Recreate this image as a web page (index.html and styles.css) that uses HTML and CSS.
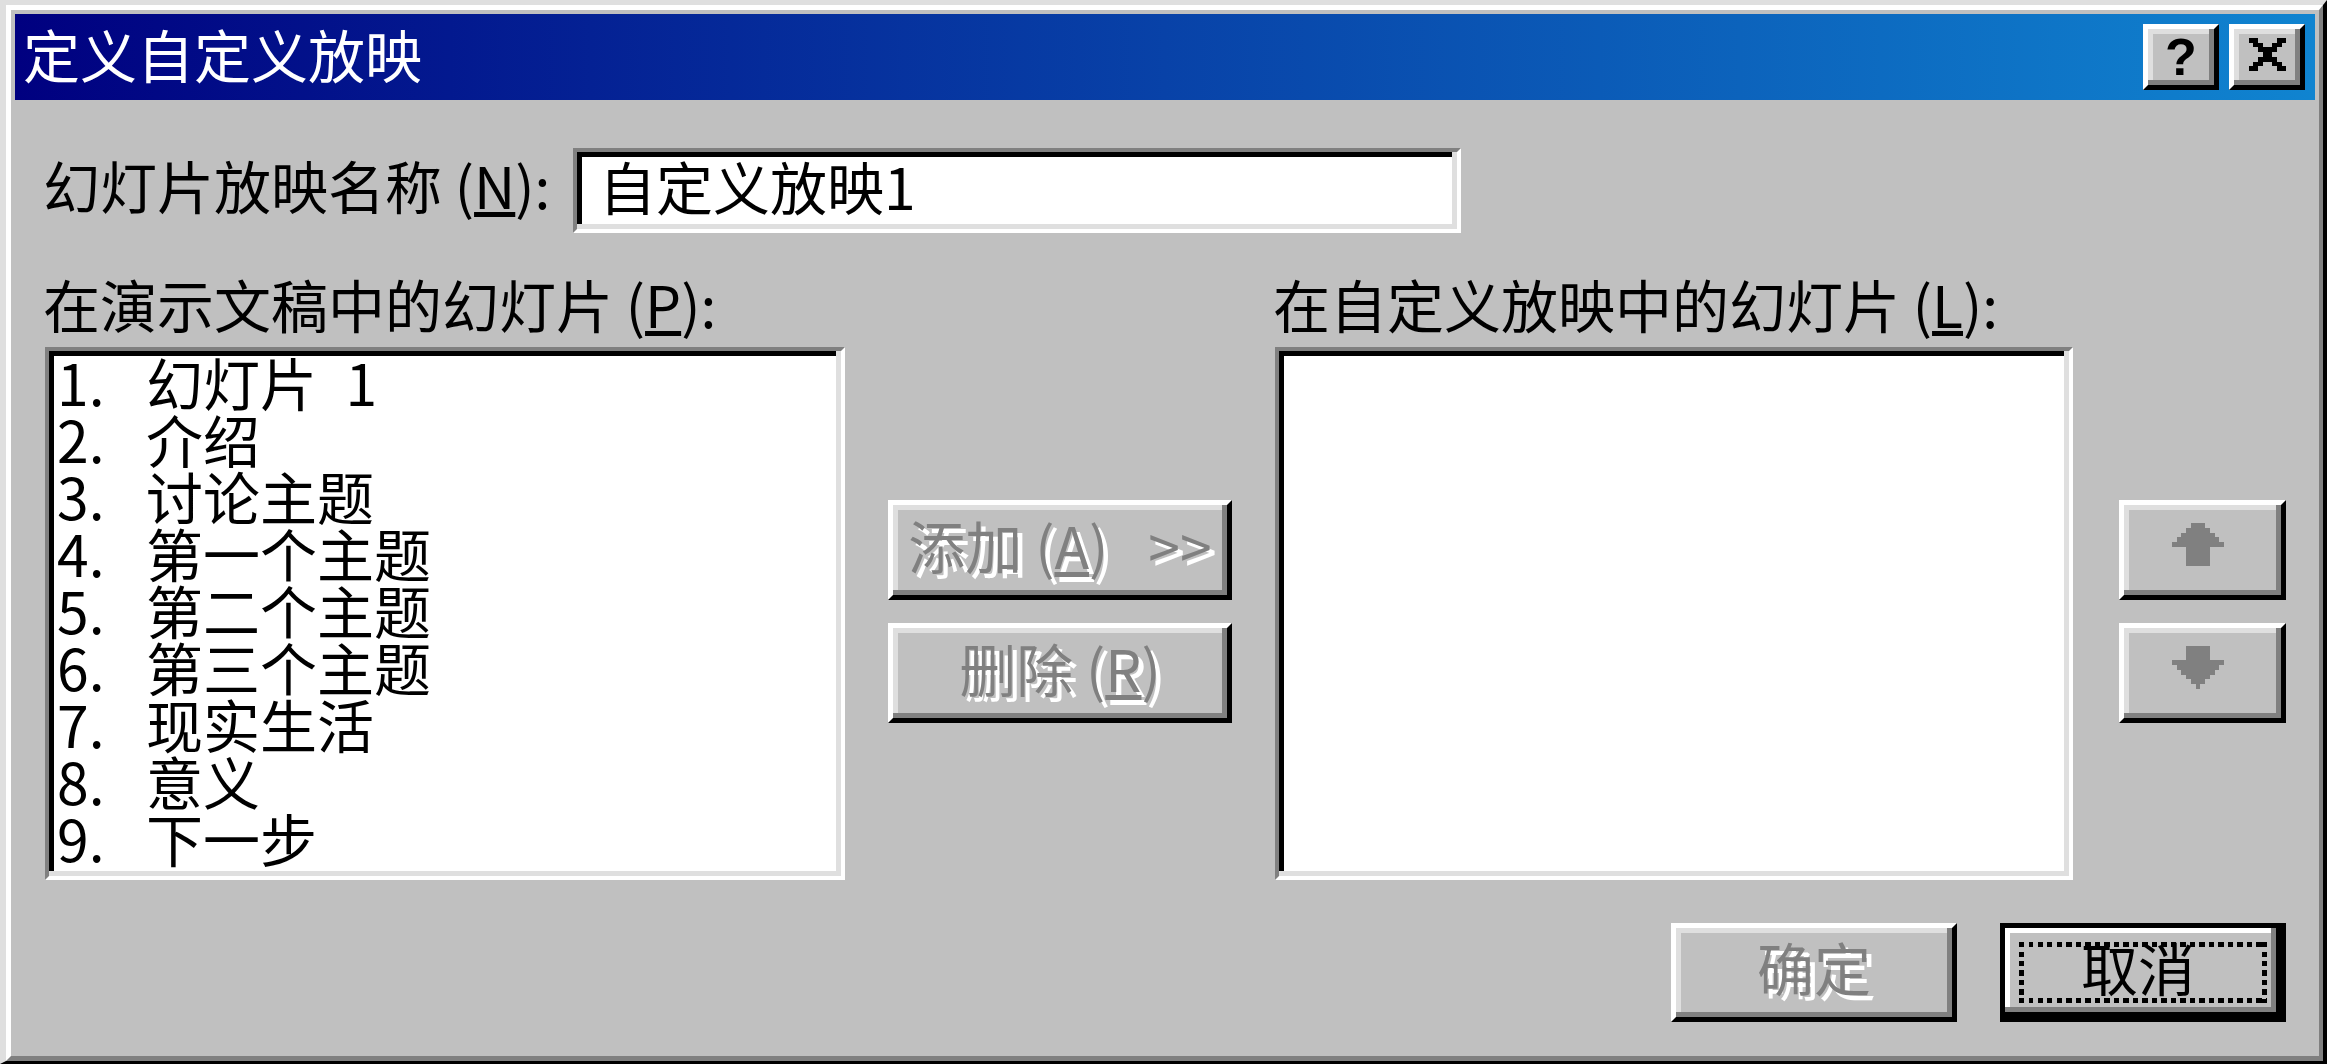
FILE: index.html
```html
<!DOCTYPE html>
<html lang="zh-CN">
<head>
<meta charset="utf-8">
<title>定义自定义放映</title>
<link rel="stylesheet" href="styles.css">
</head>
<body>
<div class="dialog">
  <div class="dialog-inner">
    <div class="titlebar">
      <span class="title-text">定义自定义放映</span>
      <div class="title-buttons">
        <button class="tb-btn" type="button"><span class="help-glyph">?</span></button>
        <button class="tb-btn" type="button">
          <svg class="close-glyph" width="39" height="33" viewBox="0 0 8 7" shape-rendering="crispEdges" aria-hidden="true">
            <rect x="0" y="0" width="2" height="1"/><rect x="6" y="0" width="2" height="1"/>
            <rect x="1" y="1" width="2" height="1"/><rect x="5" y="1" width="2" height="1"/>
            <rect x="2" y="2" width="4" height="1"/>
            <rect x="3" y="3" width="2" height="1"/>
            <rect x="2" y="4" width="4" height="1"/>
            <rect x="1" y="5" width="2" height="1"/><rect x="5" y="5" width="2" height="1"/>
            <rect x="0" y="6" width="2" height="1"/><rect x="6" y="6" width="2" height="1"/>
          </svg>
        </button>
      </div>
    </div>

    <div class="content">
      <div class="name-row">
        <label class="name-label">幻灯片放映名称 (<u>N</u>):</label>
        <div class="field name-field">自定义放映1</div>
      </div>

      <div class="lists">
        <div class="col-label">在演示文稿中的幻灯片 (<u>P</u>):</div>
        <div></div>
        <div class="col-label">在自定义放映中的幻灯片 (<u>L</u>):</div>
        <div></div>

        <div class="field listbox">
          <ul class="items">
            <li><span class="num">1.</span><span>幻灯片&ensp;1</span></li>
            <li><span class="num">2.</span><span>介绍</span></li>
            <li><span class="num">3.</span><span>讨论主题</span></li>
            <li><span class="num">4.</span><span>第一个主题</span></li>
            <li><span class="num">5.</span><span>第二个主题</span></li>
            <li><span class="num">6.</span><span>第三个主题</span></li>
            <li><span class="num">7.</span><span>现实生活</span></li>
            <li><span class="num">8.</span><span>意义</span></li>
            <li><span class="num">9.</span><span>下一步</span></li>
          </ul>
        </div>

        <div class="mid-buttons">
          <button class="btn disabled wide" type="button">添加 (<u>A</u>)<span class="gap"></span>&gt;&gt;</button>
          <button class="btn disabled wide" type="button">删除 (<u>R</u>)</button>
        </div>

        <div class="field listbox"></div>

        <div class="order-buttons">
          <button class="btn arrow" type="button">
            <svg width="52" height="43" viewBox="0 0 11 9" shape-rendering="crispEdges" aria-hidden="true">
              <rect x="4" y="0" width="3" height="1"/>
              <rect x="3" y="1" width="5" height="1"/>
              <rect x="2" y="2" width="7" height="1"/>
              <rect x="1" y="3" width="9" height="1"/>
              <rect x="0" y="4" width="11" height="1"/>
              <rect x="3" y="5" width="5" height="4"/>
            </svg>
          </button>
          <button class="btn arrow" type="button">
            <svg width="52" height="43" viewBox="0 0 11 9" shape-rendering="crispEdges" aria-hidden="true">
              <rect x="3" y="0" width="5" height="3"/>
              <rect x="0" y="3" width="11" height="1"/>
              <rect x="1" y="4" width="9" height="1"/>
              <rect x="2" y="5" width="7" height="1"/>
              <rect x="3" y="6" width="5" height="1"/>
              <rect x="4" y="7" width="3" height="1"/>
              <rect x="5" y="8" width="1" height="1"/>
            </svg>
          </button>
        </div>
      </div>

      <div class="footer">
        <button class="btn disabled footer-btn" type="button">确定</button>
        <button class="btn default footer-btn" type="button">取消</button>
      </div>
    </div>
  </div>
</div>
</body>
</html>
```

FILE: styles.css
```css
* {
  box-sizing: border-box;
}

html,
body {
  margin: 0;
  padding: 0;
}

body {
  width: 2327px;
  height: 1064px;
  overflow: hidden;
  background: #c0c0c0;
  color: #000;
  font-family: "Noto Sans CJK SC", "Noto Sans", sans-serif;
  font-size: 57px;
  line-height: 57px;
}

u {
  text-decoration-thickness: 5px;
  text-underline-offset: 3px;
}

/* window frame */
.dialog {
  width: 2327px;
  height: 1064px;
  border-style: solid;
  border-width: 5px 4px 3px 6px;
  border-color: #dfdfdf #000 #000 #dfdfdf;
  background: #c0c0c0;
}

.dialog-inner {
  height: 100%;
  border-style: solid;
  border-width: 5px 4px 5px 5px;
  border-color: #fff #808080 #808080 #fff;
  padding: 4px 4px 0 4px;
  display: flex;
  flex-direction: column;
}

/* title bar */
.titlebar {
  flex: 0 0 86px;
  display: flex;
  align-items: center;
  justify-content: space-between;
  padding: 0 10px 0 8px;
  background: linear-gradient(90deg, #000080 0%, #1084d0 100%);
}

.title-text {
  color: #fff;
  white-space: nowrap;
  margin-bottom: 8px;
}

.title-buttons {
  display: flex;
  gap: 10px;
}

.tb-btn {
  width: 76px;
  height: 66px;
  padding: 0;
  border: 5px solid;
  border-color: #fff #000 #000 #fff;
  box-shadow: inset -5px -5px 0 #808080, inset 5px 5px 0 #dfdfdf;
  background: #c0c0c0;
  display: flex;
  align-items: center;
  justify-content: center;
  color: #000;
}

.help-glyph {
  font-family: "Liberation Sans", Arial, sans-serif;
  font-weight: bold;
  font-size: 52px;
  line-height: 52px;
}

.close-glyph {
  display: block;
  margin-bottom: 5px;
  fill: #000;
}

/* content */
.content {
  flex: 1;
  padding: 0 29px 0 30px;
  display: flex;
  flex-direction: column;
}

.name-row {
  display: flex;
  margin-top: 48px;
  height: 85px;
}

.name-label {
  flex: 0 0 530px;
  margin-left: -2px;
  padding-top: 8px;
  white-space: nowrap;
}

/* sunken field */
.field {
  border: 4px solid;
  border-color: #808080 #fff #fff #808080;
  box-shadow: inset -5px -5px 0 #dfdfdf, inset 5px 5px 0 #000;
  background: #fff;
}

.name-field {
  width: 888px;
  height: 85px;
  padding: 5px 0 0 22px;
  white-space: nowrap;
}

.lists {
  margin-top: 42px;
  display: grid;
  grid-template-columns: 800px 430px 798px 213px;
  grid-template-rows: 57px 533px;
  row-gap: 15px;
}

.col-label {
  margin-left: -2px;
  white-space: nowrap;
}

.listbox {
  height: 533px;
}

.items {
  list-style: none;
  margin: 0;
  padding: 2px 0 0 8px;
}

.items li {
  display: flex;
  height: 57px;
  white-space: nowrap;
}

.num {
  flex: 0 0 89px;
}

/* raised buttons */
.btn {
  padding: 0 0 12px 0;
  border: 5px solid;
  border-color: #fff #000 #000 #fff;
  box-shadow: inset -5px -5px 0 #808080, inset 5px 5px 0 #dfdfdf;
  background: #c0c0c0;
  color: #000;
  font: inherit;
  display: flex;
  align-items: center;
  justify-content: center;
  white-space: nowrap;
}

.btn.disabled {
  color: #808080;
  text-shadow: 5px 5px 0 #fff;
}

.mid-buttons {
  display: flex;
  flex-direction: column;
  align-items: center;
  gap: 23px;
  padding-top: 153px;
}

.btn.wide {
  width: 344px;
  height: 100px;
}

.gap {
  display: inline-block;
  width: 40px;
}

.order-buttons {
  display: flex;
  flex-direction: column;
  gap: 23px;
  padding: 153px 0 0 46px;
}

.btn.arrow {
  width: 167px;
  height: 100px;
  padding: 0 9px 11px 0;
}

.btn.arrow svg {
  display: block;
  fill: #808080;
}

.footer {
  margin-top: 43px;
  display: flex;
  justify-content: flex-end;
  gap: 43px;
}

.footer-btn {
  width: 286px;
  height: 99px;
}

.btn.default {
  position: relative;
  border-color: #000;
  padding-right: 10px;
  box-shadow: inset -5px -5px 0 #000, inset -10px -10px 0 #808080, inset 5px 5px 0 #fff;
}

.btn.default::after {
  content: "";
  position: absolute;
  top: 14px;
  left: 14px;
  right: 14px;
  bottom: 14px;
  background:
    repeating-linear-gradient(to right, #000 0 5px, transparent 5px 9.5px) top / 100% 5px no-repeat,
    repeating-linear-gradient(to right, #000 0 5px, transparent 5px 9.5px) bottom / 100% 5px no-repeat,
    repeating-linear-gradient(to bottom, #000 0 5px, transparent 5px 9.5px) left / 5px 100% no-repeat,
    repeating-linear-gradient(to bottom, #000 0 5px, transparent 5px 9.5px) right / 5px 100% no-repeat;
}
```
